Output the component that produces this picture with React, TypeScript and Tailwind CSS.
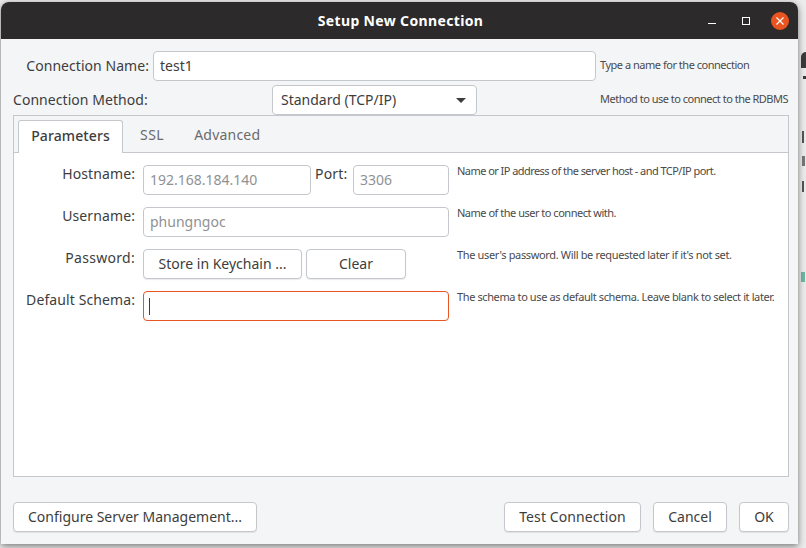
import React from 'react';

const font = "font-['Noto_Sans','Open_Sans',sans-serif]";

const inputBox = 'flex h-[30px] items-center rounded-[4px] border border-[#c4c8cc] bg-white px-[6px] pb-[2px] text-[14px] text-[#8f9294]';
const button = 'flex h-[30px] items-center justify-center rounded-[4px] border border-[#c4c8cc] bg-white pb-[1px] text-[14px] text-[#3d3d3d] shadow-[0_1px_1px_rgba(0,0,0,0.08)]';
const hint = 'whitespace-nowrap text-[11px] text-[#4a4a4a]';

const Row: React.FC<{ label: string; hintText: string; hintClass: string; labelClass?: string; children: React.ReactNode }> = ({ label, hintText, hintClass, labelClass = 'tracking-[0.1px]', children }) => (
  <div className="flex h-[30px]">
    <div className={`w-[121px] whitespace-nowrap pt-[1px] text-right text-[14px] leading-[16px] text-[#3d3d3d] ${labelClass}`}>{label}</div>
    <div className="ml-[8px] flex w-[306px] gap-[4px]">{children}</div>
    <div className={`ml-[8px] leading-[12px] ${hint} ${hintClass}`}>{hintText}</div>
  </div>
);

export default function App() {
  return (
    <div className={`relative h-[548px] w-[806px] overflow-hidden bg-[#ececec] ${font}`}>
      {/* bits of the window behind the dialog */}
      <div className="absolute left-[801px] top-[52px] h-[16px] w-[5px] rounded-tl-full bg-[#3a3a3a]" />
      <div className="absolute left-[803px] top-[76px] h-[3px] w-[3px] bg-[#3a3a3a]" />
      <div className="absolute left-[802px] top-[131px] h-[12px] w-[2px] bg-[#555555]" />
      <div className="absolute left-[802px] top-[156px] h-[10px] w-[3px] bg-[#777777]" />
      <div className="absolute left-[802px] top-[181px] h-[11px] w-[2px] bg-[#555555]" />
      <div className="absolute left-[801px] top-[272px] h-[10px] w-[4px] bg-[#6fb7a8]" />

      <div className="relative ml-[1px] mt-[2px] flex h-[542px] w-[797px] flex-col overflow-hidden rounded-t-[8px] bg-[#f4f5f7] shadow-[0_2px_7px_rgba(0,0,0,0.5)]">
        {/* title bar */}
        <div className="relative flex h-[37px] shrink-0 items-center justify-center bg-[#2c2a2a] pl-[2px] text-[14px] font-bold tracking-[0.35px] text-white">
          Setup New Connection
          <div className="absolute left-[707px] top-0 flex h-[37px] items-center">
            <div className="mt-[5px] h-[1px] w-[8px] bg-white" />
            <div className="ml-[26px] h-[8px] w-[8px] border border-white" />
            <div className="ml-[21px] flex h-[18px] w-[18px] items-center justify-center rounded-full bg-[#e95420]">
              <svg width="8" height="8" viewBox="0 0 8 8" fill="none" stroke="white" strokeWidth="1.2">
                <path d="M0.5 0.5 L7.5 7.5 M7.5 0.5 L0.5 7.5" />
              </svg>
            </div>
          </div>
        </div>

        {/* connection name */}
        <div className="mt-[12px] flex h-[30px] items-center">
          <div className="w-[148px] whitespace-nowrap pb-[2px] text-right text-[14px] tracking-[0.05px] text-[#3d3d3d]">Connection Name:</div>
          <div className="ml-[4px] flex h-[30px] w-[443px] items-center rounded-[4px] border border-[#c4c8cc] bg-white px-[6px] pb-[2px] text-[14px] text-[#3d3d3d]">test1</div>
          <div className={`ml-[4px] pb-[2px] tracking-[-0.48px] ${hint}`}>Type a name for the connection</div>
        </div>

        {/* connection method */}
        <div className="mt-[4px] flex h-[30px] items-center">
          <div className="ml-[12px] w-[259px] pb-[2px] text-[14px] tracking-[0.05px] text-[#3d3d3d]">Connection Method:</div>
          <div className="flex h-[30px] w-[205px] items-center justify-between rounded-[4px] border border-[#c4c8cc] bg-white pl-[8px] pr-[10px] text-[14px] text-[#3d3d3d]">
            <span className="pb-[2px]">Standard (TCP/IP)</span>
            <svg width="10" height="5" viewBox="0 0 10 5" fill="#3d3d3d"><path d="M0 0 H10 L5 5 Z" /></svg>
          </div>
          <div className={`ml-[123px] pb-[2px] tracking-[-0.5px] ${hint}`}>Method to use to connect to the RDBMS</div>
        </div>

        {/* tab frame */}
        <div className="ml-[12px] flex h-[362px] w-[776px] flex-col border border-[#c4c8cc]">
          <div className="flex h-[37px] shrink-0 items-end border-b border-[#c4c8cc] pl-[4px]">
            <div className="mb-[-1px] flex h-[33px] w-[105px] items-center justify-center rounded-t-[3px] border border-b-0 border-[#c4c8cc] bg-white pb-[3px] text-[14px] font-medium tracking-[0.1px] text-[#3d3d3d]">Parameters</div>
            <div className="ml-[17px] flex h-[32px] items-center pb-[3px] text-[14px] tracking-[0.5px] text-[#6b6b6b]">SSL</div>
            <div className="ml-[30px] flex h-[32px] items-center pb-[3px] text-[14px] tracking-[0.2px] text-[#6b6b6b]">Advanced</div>
          </div>
          <div className="flex flex-1 flex-col gap-[12px] bg-white pt-[12px]">
            <Row label="Hostname:" hintText="Name or IP address of the server host - and TCP/IP port." hintClass="tracking-[-0.55px]">
              <div className={`${inputBox} w-[168px]`}>192.168.184.140</div>
              <div className="w-[34px] pt-[1px] text-[14px] leading-[16px] tracking-[0.2px] text-[#3d3d3d]">Port:</div>
              <div className={`${inputBox} w-[96px]`}>3306</div>
            </Row>
            <Row label="Username:" hintText="Name of the user to connect with." hintClass="tracking-[-0.49px]">
              <div className={`${inputBox} w-full`}>phungngoc</div>
            </Row>
            <Row label="Password:" labelClass="tracking-[0.3px]" hintText="The user's password. Will be requested later if it's not set." hintClass="tracking-[-0.35px]">
              <div className={`${button} w-[159px]`}>Store in Keychain ...</div>
              <div className={`${button} w-[100px]`}>Clear</div>
            </Row>
            <Row label="Default Schema:" hintText="The schema to use as default schema. Leave blank to select it later." hintClass="tracking-[-0.39px]">
              <div className="flex h-[30px] w-full items-center rounded-[4px] border border-[#e95420] bg-white px-[5px]">
                <div className="h-[17px] w-[1px] bg-[#3d3d3d]" />
              </div>
            </Row>
          </div>
        </div>

        {/* footer */}
        <div className="ml-[12px] mt-[25px] flex w-[776px]">
          <div className={`${button} w-[244px]`}>Configure Server Management...</div>
          <div className="ml-auto flex gap-[12px]">
            <div className={`${button} w-[137px] tracking-[0.1px]`}>Test Connection</div>
            <div className={`${button} w-[74px]`}>Cancel</div>
            <div className={`${button} w-[50px]`}>OK</div>
          </div>
        </div>
      </div>
    </div>
  );
}
